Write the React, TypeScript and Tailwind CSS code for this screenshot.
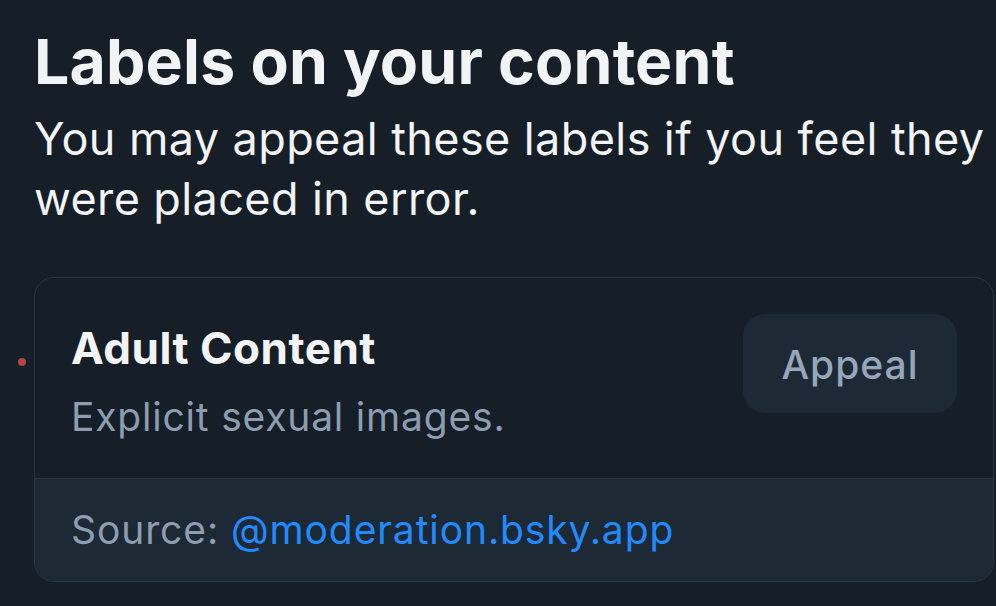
export default function App() {
  return (
    <div
      className="relative w-[996px] h-[606px] overflow-hidden bg-[#161e27] pl-[34px] pt-[24px] text-[#f1f3f5]"
      style={{ fontFamily: 'Inter, "Noto Sans", sans-serif' }}
    >
      <h1 className="text-[62.5px] leading-[74px] font-bold tracking-[0.2px] whitespace-nowrap">
        Labels on your content
      </h1>
      <p className="mt-[11px] w-[960px] text-[45px] leading-[60px] tracking-[0.4px]">
        You may appeal these labels if you feel they were placed in error.
      </p>

      <div className="absolute left-[18px] top-[358px] w-[8px] h-[8px] rounded-full bg-[#b8434a]" />

      <div className="mt-[48px] w-[960px] rounded-[20px] border border-[#2b3745] overflow-hidden">
        <div className="flex items-start justify-between p-[36px]">
          <div className="pt-[6px]">
            <div className="text-[44px] leading-[56px] font-bold tracking-[0.5px]">Adult Content</div>
            <div className="mt-[16px] text-[39px] leading-[50px] tracking-[0.8px] text-[#8c9db1]">
              Explicit sexual images.
            </div>
          </div>
          <button className="flex h-[99px] w-[214px] items-center justify-center rounded-[22px] bg-[#1e2936] pt-[4px] text-[39px] font-medium tracking-[1px] text-[#95a6ba]">
            Appeal
          </button>
        </div>
        <div className="border-t border-[#2b3745] bg-[#1e2936] px-[36px] py-[26px] text-[39px] leading-[50px] tracking-[0.9px] text-[#8c9db1]">
          Source: <span className="text-[#208bfe]">@moderation.bsky.app</span>
        </div>
      </div>
    </div>
  );
}
